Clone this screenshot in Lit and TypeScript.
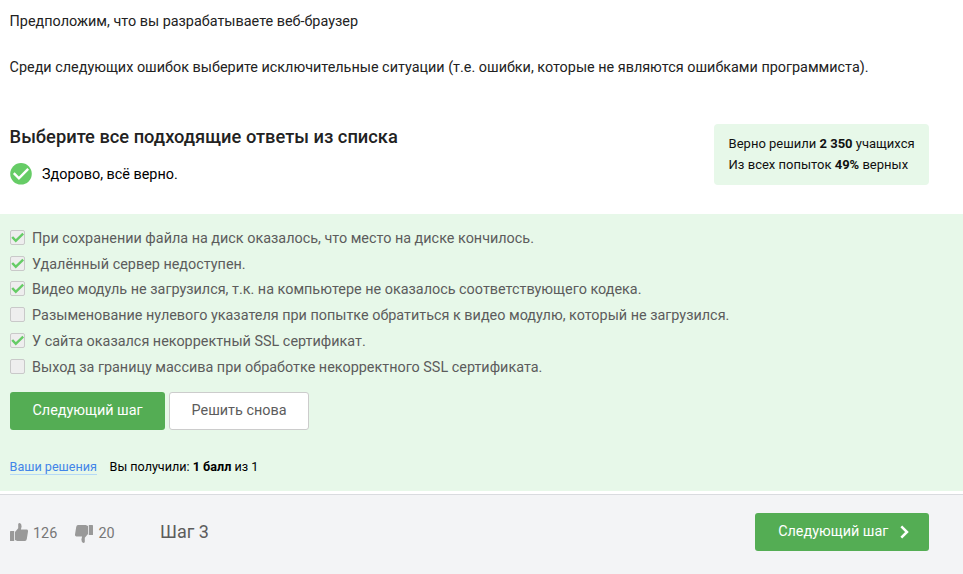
import { LitElement, html, css, svg } from "lit";
import { customElement } from "lit/decorators.js";

const OPTIONS = [
  { text: "При сохранении файла на диск оказалось, что место на диске кончилось.", on: true },
  { text: "Удалённый сервер недоступен.", on: true },
  { text: "Видео модуль не загрузился, т.к. на компьютере не оказалось соответствующего кодека.", on: true },
  { text: "Разыменование нулевого указателя при попытке обратиться к видео модулю, который не загрузился.", on: false },
  { text: "У сайта оказался некорректный SSL сертификат.", on: true },
  { text: "Выход за границу массива при обработке некорректного SSL сертификата.", on: false },
];

const thumb = svg`
  <path d="M0.6 8h3.6V18H0.6Q0 18 0 17.4V8.6Q0 8 0.6 8Z"/>
  <path d="M5 9L8.2 5.2V1.2Q8.4 0 9.6 0Q11.6 0.4 11.6 3.4L10.9 6.6H16.6Q18.2 6.8 18 8.4L16.8 16Q16.4 17.8 15 18H7.2L5 17Z"/>`;

@customElement("app-root")
export class AppRoot extends LitElement {
  static styles = css`
    :host {
      display: flex;
      flex-direction: column;
      box-sizing: border-box;
      height: 574px;
      overflow: hidden;
      background: #fff;
      color: #222;
      font: 14.4px/23px Roboto, sans-serif;
    }
    p, h2, ul { margin: 0; padding: 0; }
    svg { display: block; flex: none; }
    .task { padding: 10px 9.6px 0; height: 114px; box-sizing: content-box; }
    .task p + p { margin-top: 23px; }
    .head {
      display: flex;
      justify-content: space-between;
      align-items: flex-start;
      height: 90px;
      padding: 0 34px 0 9.6px;
    }
    h2 { font-size: 18.29px; font-weight: 500; line-height: 26px; }
    .result { display: flex; align-items: center; gap: 10.4px; height: 22px; margin-top: 13px; color: #000; }
    .stats {
      box-sizing: border-box;
      width: 215px;
      height: 61px;
      padding: 9px 0 0 14.6px;
      border-radius: 4px;
      background: #e7f8e9;
      color: #111;
      font-size: 13px;
      line-height: 21px;
      white-space: nowrap;
    }
    b { font-weight: 700; }
    .quiz { box-sizing: border-box; height: 277px; padding: 11px 9.6px 0; background: #e7f8e9; }
    ul { list-style: none; color: #5c5c5c; }
    li { display: flex; align-items: center; height: 25.8px; gap: 7.5px; }
    .label { padding-top: 1px; }
    .box {
      box-sizing: border-box;
      width: 15px;
      height: 15px;
      margin-bottom: 1px;
      border: 1px solid #c9c9c9;
      border-radius: 2px;
      background: #eee;
    }
    .actions { display: flex; gap: 4px; margin-top: 12.2px; }
    .btn {
      box-sizing: border-box;
      display: flex;
      align-items: center;
      justify-content: center;
      height: 38px;
      width: 155px;
      padding: 0 0 0 0.9px;
      border: 0;
      border-radius: 3px;
      background: #54ad54;
      color: #fff;
      font: inherit;
    }
    .ghost { width: 140px; border: 1px solid #ccc; background: #fff; color: #5c5c5c; }
    .score { display: flex; gap: 12.6px; margin-top: 29px; color: #000; font-size: 12.6px; line-height: 15px; }
    .link { border-bottom: 1px solid #b5d9f5; color: #4285e8; }
    footer {
      box-sizing: border-box;
      display: flex;
      align-items: center;
      height: 80px;
      margin-top: 3px;
      padding: 0 34px 5px 10px;
      border-top: 1px solid #d9dbdf;
      background: #f3f4f6;
      color: #777;
    }
    .vote { display: flex; align-items: center; gap: 5px; }
    .vote svg { fill: #999; }
    .vote span { padding-top: 2px; }
    .up { width: 65px; }
    .down { width: 85px; gap: 5.5px; }
    .down svg { transform: rotate(180deg); margin-top: 3px; }
    .step { flex: 1; padding-bottom: 2px; color: #5c5c5c; font-size: 18px; }
    .next { width: 174px; gap: 12px; padding: 0 0 1px 3.5px; }
    .next svg { margin-top: 1px; }
  `;

  render() {
    return html`
      <section class="task">
        <p>Предположим, что вы разрабатываете веб-браузер</p>
        <p>Среди следующих ошибок выберите исключительные ситуации (т.е. ошибки, которые не являются ошибками программиста).</p>
      </section>
      <section class="head">
        <div>
          <h2>Выберите все подходящие ответы из списка</h2>
          <div class="result">
            <svg width="22" height="22" viewBox="0 0 22 22">
              <circle cx="11" cy="10.8" r="10.8" fill="#66cc66" />
              <path d="M3.8 10.2L8.9 15.3L18.2 5.8" fill="none" stroke="#fff" stroke-width="2.4" />
            </svg>
            <span>Здорово, всё верно.</span>
          </div>
        </div>
        <div class="stats">
          <div>Верно решили <b>2 350</b> учащихся</div>
          <div>Из всех попыток <b>49%</b> верных</div>
        </div>
      </section>
      <section class="quiz">
        <ul>
          ${OPTIONS.map((o) => html`<li>
            <span class="box">${o.on
              ? html`<svg width="13" height="13" viewBox="0 0 13 13"><path d="M1.2 6L4.8 9.8L12.2 2.6" fill="none" stroke="#66cc66" stroke-width="2.5" /></svg>`
              : ""}</span>
            <span class="label">${o.text}</span>
          </li>`)}
        </ul>
        <div class="actions">
          <button class="btn">Следующий шаг</button>
          <button class="btn ghost">Решить снова</button>
        </div>
        <div class="score">
          <span class="link">Ваши решения</span>
          <span>Вы получили: <b>1 балл</b> из 1</span>
        </div>
      </section>
      <footer>
        <div class="vote up"><svg width="18" height="18" viewBox="0 0 18 18">${thumb}</svg><span>126</span></div>
        <div class="vote down"><svg width="18" height="18" viewBox="0 0 18 18">${thumb}</svg><span>20</span></div>
        <div class="step">Шаг 3</div>
        <button class="btn next">Следующий шаг
          <svg width="9" height="14" viewBox="0 0 9 14"><path d="M1.3 1.3L7 7L1.3 12.7" fill="none" stroke="#fff" stroke-width="2.5" /></svg>
        </button>
      </footer>
    `;
  }
}
